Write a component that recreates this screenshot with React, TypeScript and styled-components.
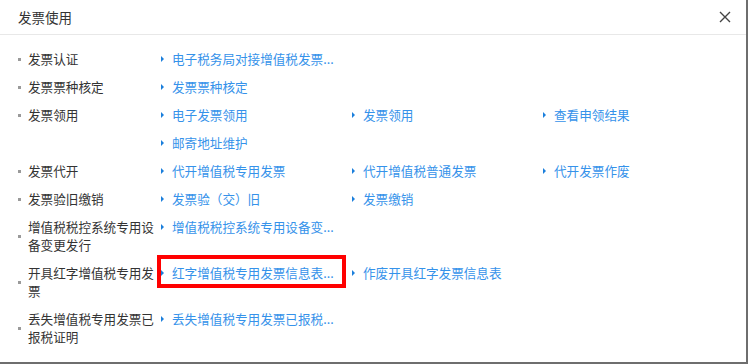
import styled, { createGlobalStyle } from "styled-components";

type LinkDef = { text: string; highlight?: boolean };
type RowDef = { label: string; links: LinkDef[] };

const rows: RowDef[] = [
  { label: "发票认证", links: [{ text: "电子税务局对接增值税发票..." }] },
  { label: "发票票种核定", links: [{ text: "发票票种核定" }] },
  {
    label: "发票领用",
    links: [
      { text: "电子发票领用" },
      { text: "发票领用" },
      { text: "查看申领结果" },
      { text: "邮寄地址维护" },
    ],
  },
  {
    label: "发票代开",
    links: [
      { text: "代开增值税专用发票" },
      { text: "代开增值税普通发票" },
      { text: "代开发票作废" },
    ],
  },
  {
    label: "发票验旧缴销",
    links: [{ text: "发票验（交）旧" }, { text: "发票缴销" }],
  },
  {
    label: "增值税税控系统专用设备变更发行",
    links: [{ text: "增值税税控系统专用设备变..." }],
  },
  {
    label: "开具红字增值税专用发票",
    links: [
      { text: "红字增值税专用发票信息表...", highlight: true },
      { text: "作废开具红字发票信息表" },
    ],
  },
  {
    label: "丢失增值税专用发票已报税证明",
    links: [{ text: "丢失增值税专用发票已报税..." }],
  },
];

function App() {
  return (
    <>
      <GlobalStyle />
      <Modal>
        <Header>
          <Title>发票使用</Title>
          <CloseButton aria-label="关闭">
            <svg width="12" height="12" viewBox="0 0 12 12">
              <path
                d="M1 1 L11 11 M11 1 L1 11"
                stroke="#444"
                strokeWidth="1.4"
                fill="none"
              />
            </svg>
          </CloseButton>
        </Header>
        <Body>
          {rows.map((row) => (
            <Row key={row.label}>
              <LabelCell>
                <Bullet />
                <Label>{row.label}</Label>
              </LabelCell>
              <Links>
                {row.links.map((link) => (
                  <LinkItem key={link.text} $highlight={link.highlight}>
                    <Arrow />
                    <LinkText>{link.text}</LinkText>
                  </LinkItem>
                ))}
              </Links>
            </Row>
          ))}
        </Body>
      </Modal>
    </>
  );
}

const GlobalStyle = createGlobalStyle`
  html, body {
    margin: 0;
    padding: 0;
    background: #6e6e6e;
  }
  body {
    font-family: "Noto Sans CJK SC", "Noto Sans", sans-serif;
  }
`;

const Modal = styled.div`
  width: 746px;
  height: 362px;
  background: #fff;
  box-sizing: border-box;
`;

const Header = styled.div`
  height: 35px;
  box-sizing: border-box;
  border-bottom: 1px solid #e8e8e8;
  display: flex;
  align-items: center;
  justify-content: space-between;
  padding: 0 14px 0 18px;
`;

const Title = styled.div`
  font-size: 13.5px;
  color: #333;
  line-height: 18px;
`;

const CloseButton = styled.button`
  border: none;
  background: none;
  padding: 0;
  width: 14px;
  height: 14px;
  display: flex;
  align-items: center;
  justify-content: center;
  cursor: pointer;
`;

const Body = styled.div`
  padding: 10px 0 0 18px;
`;

const Row = styled.div`
  display: flex;
  align-items: flex-start;
`;

const LabelCell = styled.div`
  display: flex;
  align-items: center;
  width: 142px;
  flex-shrink: 0;
  padding: 5px 0;
`;

const Bullet = styled.span`
  width: 3px;
  height: 3px;
  background: #9a9a9a;
  margin-right: 7px;
  flex-shrink: 0;
`;

const Label = styled.span`
  width: 132px;
  font-size: 12.6px;
  line-height: 18px;
  color: #333;
  word-break: break-all;
`;

const Links = styled.div`
  display: grid;
  grid-template-columns: repeat(3, 191px);
`;

const LinkItem = styled.div<{ $highlight?: boolean }>`
  position: relative;
  display: flex;
  align-items: center;
  padding: 5px 0 5px 1px;

  ${({ $highlight }) =>
    $highlight &&
    `
    &::after {
      content: "";
      position: absolute;
      top: -4px;
      bottom: -1px;
      left: -3px;
      right: 5px;
      border: 4px solid #f00;
    }
  `}
`;

const Arrow = styled.span`
  width: 0;
  height: 0;
  border-top: 3px solid transparent;
  border-bottom: 3px solid transparent;
  border-left: 3px solid #1b7fdc;
  margin-right: 8px;
`;

const LinkText = styled.a`
  font-size: 12.6px;
  line-height: 18px;
  color: #3592ea;
  white-space: nowrap;
  cursor: pointer;
`;

export default App;
